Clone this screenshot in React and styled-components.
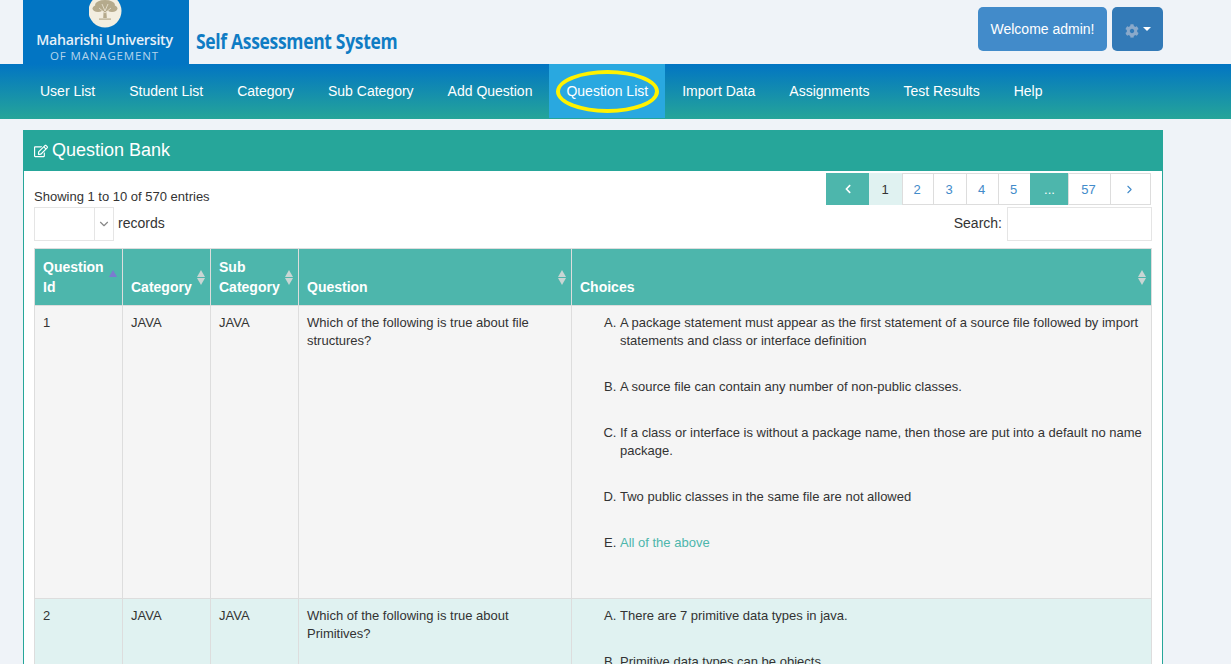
import React from "react";
import styled, { createGlobalStyle } from "styled-components";
import { FaCog, FaRegEdit, FaChevronLeft } from "react-icons/fa";
import { FiChevronDown, FiChevronRight } from "react-icons/fi";

const GlobalStyle = createGlobalStyle`
  html, body {
    margin: 0;
    height: 100%;
    overflow: hidden;
    background: #eff3f8;
    font-family: "Liberation Sans", Arial, sans-serif;
    color: #333;
  }
  * {
    box-sizing: border-box;
  }
`;

const Header = styled.header`
  display: flex;
  align-items: flex-start;
  height: 64px;
  padding: 0 68px 0 23px;
`;

const Logo = styled.div`
  display: flex;
  flex-direction: column;
  align-items: center;
  width: 166px;
  height: 64px;
  background: #0275c3;
  color: #fff;
  overflow: hidden;
`;

const LogoName = styled.div`
  margin: 4px 3px 0 0;
  font-family: "Open Sans", sans-serif;
  font-size: 14.2px;
  font-weight: 600;
  letter-spacing: -0.25px;
  line-height: 16px;
  white-space: nowrap;
  color: #e6f0f8;
`;

const LogoSub = styled.div`
  margin: 1px 3px 0 0;
  font-family: "Open Sans", sans-serif;
  font-size: 11.5px;
  line-height: 13px;
  letter-spacing: 0.85px;
  white-space: nowrap;
  color: #b4d4ec;
`;

const SiteTitle = styled.div`
  margin: 28px 0 0 7px;
  font-family: "Open Sans", sans-serif;
  font-size: 22px;
  line-height: 24px;
  font-weight: 700;
  letter-spacing: -0.4px;
  color: #0f7cc4;
  transform: scaleX(0.795);
  transform-origin: left center;
  white-space: nowrap;
`;

const UserArea = styled.div`
  display: flex;
  gap: 5px;
  margin: 7px 0 0 auto;
`;

const WelcomeButton = styled.div`
  display: flex;
  align-items: center;
  justify-content: center;
  width: 129px;
  height: 44px;
  border-radius: 5px;
  background: #428bca;
  color: #fff;
  font-size: 14px;
`;

const GearButton = styled.div`
  display: flex;
  align-items: center;
  justify-content: center;
  gap: 4px;
  width: 51px;
  height: 44px;
  padding-top: 3px;
  border-radius: 5px;
  background: #337ab7;
  color: #8aa9ca;
  font-size: 14px;
`;

const Caret = styled.span`
  width: 0;
  height: 0;
  margin: -4px 0 0 0;
  border-left: 4px solid transparent;
  border-right: 4px solid transparent;
  border-top: 4px solid #fff;
`;

const Nav = styled.nav`
  display: flex;
  height: 55px;
  padding-left: 23px;
  background: linear-gradient(to bottom, #0275c3, #25a599);
`;

const NavItem = styled.a`
  position: relative;
  display: flex;
  align-items: center;
  height: 54px;
  padding: 0 17px;
  font-size: 14px;
  color: #fff;
  background: ${(p) => (p.$active ? "#29a8e0" : "transparent")};
`;

const Highlight = styled.span`
  position: absolute;
  left: 7px;
  top: 6px;
  width: 103px;
  height: 43px;
  border: 4px solid #fff200;
  border-radius: 50%;
`;

const Panel = styled.section`
  margin: 11px 68px 0 23px;
  background: #fff;
  border: 1px solid #26a69a;
  border-width: 0 1px;
`;

const PanelHeading = styled.h2`
  display: flex;
  align-items: center;
  gap: 4px;
  height: 41px;
  margin: 0 -1px;
  padding: 0 0 0 11px;
  background: #26a69a;
  color: #fff;
  font-size: 18px;
  font-weight: 400;

  svg {
    font-size: 14px;
  }
`;

const PanelBody = styled.div`
  padding: 2px 10px 0;
`;

const TopRow = styled.div`
  display: flex;
  justify-content: space-between;
  align-items: flex-end;
  padding-right: 1px;
`;

const Info = styled.div`
  margin-bottom: -1px;
  font-size: 13px;
  line-height: 18px;
`;

const Pagination = styled.ul`
  display: flex;
  margin: 0;
  padding: 0;
  list-style: none;
  height: 32px;
`;

const PageItem = styled.li`
  display: flex;
  align-items: center;
  justify-content: center;
  width: ${(p) => p.$w}px;
  padding-right: ${(p) => (p.$fill ? 0 : 2)}px;
  font-size: 13px;
  border: 1px solid #ddd;
  margin-left: -1px;
  color: ${(p) => (p.$current ? "#333" : p.$fill ? "#fff" : "#428bca")};
  background: ${(p) => (p.$current ? "#e0f2f1" : p.$fill ? "#4db6ac" : "#fff")};
  border-color: ${(p) => (p.$current ? "#e0f2f1" : p.$fill ? "#4db6ac" : "#ddd")};

  svg {
    font-size: ${(p) => (p.$fill ? 10 : 13)}px;
  }
`;

const ControlRow = styled.div`
  display: flex;
  align-items: center;
  justify-content: space-between;
  margin-top: 2px;
`;

const Length = styled.div`
  display: flex;
  align-items: center;
  gap: 4px;
`;

const ControlLabel = styled.span`
  margin-bottom: 2px;
  font-size: 14px;
`;

const FakeSelect = styled.div`
  display: flex;
  justify-content: flex-end;
  width: 80px;
  height: 34px;
  background: #fff;
  border: 1px solid #e5e5e5;
`;

const SelectArrow = styled.span`
  display: flex;
  align-items: center;
  justify-content: center;
  width: 19px;
  border-left: 1px solid #e5e5e5;
  color: #888;
  font-size: 14px;
`;

const Search = styled.label`
  display: flex;
  align-items: center;
  gap: 5px;
`;

const SearchInput = styled.input`
  width: 145px;
  height: 34px;
  padding: 0 6px;
  border: 1px solid #e5e5e5;
  background: #fff;
  outline: none;
`;

const Table = styled.table`
  width: 1118px;
  margin-top: 7px;
  border-collapse: collapse;
  table-layout: fixed;
  font-size: 13px;
  line-height: 18px;
`;

const Th = styled.th`
  position: relative;
  width: ${(p) => p.$w}px;
  padding: 8px;
  border: 1px solid #ddd;
  background: #4db6ac;
  color: #fff;
  font-size: 14px;
  line-height: 20px;
  text-align: left;
  vertical-align: bottom;
`;

const Td = styled.td`
  padding: 8px;
  border: 1px solid #ddd;
  vertical-align: top;
`;

const Row = styled.tr`
  background: ${(p) => (p.$alt ? "#e0f2f1" : "#f5f5f5")};
`;

const SortIcon = styled.span`
  position: absolute;
  right: 5px;
  top: 21px;
  display: flex;
  flex-direction: column;
  gap: 1px;
`;

const Tri = styled.span`
  width: 0;
  height: 0;
  border-left: 4px solid transparent;
  border-right: 4px solid transparent;
  ${(p) =>
    p.$down
      ? "border-top: 7px solid #c9d6d4;"
      : `border-bottom: 7px solid ${p.$on ? "#7b7bd0" : "#c9d6d4"};`}
`;

const Choices = styled.ol`
  margin: 0 0 38px;
  padding-left: 40px;
  list-style: upper-alpha;
`;

const Choice = styled.li`
  margin-bottom: 28px;
  color: ${(p) => (p.$correct ? "#4db6ac" : "#333")};

  &::marker {
    color: #333;
  }
`;

const Sort = ({ on }) => (
  <SortIcon>
    <Tri $on={on} />
    {!on && <Tri $down />}
  </SortIcon>
);

const navItems = [
  "User List",
  "Student List",
  "Category",
  "Sub Category",
  "Add Question",
  "Question List",
  "Import Data",
  "Assignments",
  "Test Results",
  "Help",
];

const pages = [
  { label: <FaChevronLeft />, w: 44, fill: true },
  { label: "1", w: 34, current: true },
  { label: "2", w: 32 },
  { label: "3", w: 34 },
  { label: "4", w: 33 },
  { label: "5", w: 33 },
  { label: "...", w: 39, fill: true },
  { label: "57", w: 43 },
  { label: <FiChevronRight />, w: 41 },
];

const rows = [
  {
    id: 1,
    question: "Which of the following is true about file structures?",
    choices: [
      "A package statement must appear as the first statement of a source file followed by import statements and class or interface definition",
      "A source file can contain any number of non-public classes.",
      "If a class or interface is without a package name, then those are put into a default no name package.",
      "Two public classes in the same file are not allowed",
      "All of the above",
    ],
    correct: 4,
  },
  {
    id: 2,
    question: "Which of the following is true about Primitives?",
    choices: [
      "There are 7 primitive data types in java.",
      "Primitive data types can be objects.",
    ],
    correct: -1,
  },
];

const TreeEmblem = () => (
  <svg width="34" height="28" viewBox="1 6 34 28">
    <circle cx="17" cy="17" r="16.5" fill="#f3eee0" />
    <g fill="#b5aa8c">
      <ellipse cx="17" cy="11" rx="10" ry="5" />
      <ellipse cx="10" cy="14.5" rx="5.5" ry="3.5" />
      <ellipse cx="24" cy="14.5" rx="5.5" ry="3.5" />
      <ellipse cx="17" cy="15" rx="4" ry="2.5" />
      <path d="M15.8 15h2.4l.6 9h-3.6z" />
      <rect x="11" y="24.5" width="12" height="1.2" />
    </g>
    <g stroke="#f3eee0" strokeWidth=".7" fill="none">
      <path d="M17 19l-6-5M17 19l6-5M17 17l-3-7M17 17l3-7" />
    </g>
  </svg>
);

export default function App() {
  return (
    <>
      <GlobalStyle />
      <Header>
        <Logo>
          <TreeEmblem />
          <LogoName>Maharishi University</LogoName>
          <LogoSub>OF MANAGEMENT</LogoSub>
        </Logo>
        <SiteTitle>Self Assessment System</SiteTitle>
        <UserArea>
          <WelcomeButton>Welcome admin!</WelcomeButton>
          <GearButton>
            <FaCog />
            <Caret />
          </GearButton>
        </UserArea>
      </Header>
      <Nav>
        {navItems.map((item) => (
          <NavItem key={item} $active={item === "Question List"}>
            {item}
            {item === "Question List" && <Highlight />}
          </NavItem>
        ))}
      </Nav>
      <Panel>
        <PanelHeading>
          <FaRegEdit />
          Question Bank
        </PanelHeading>
        <PanelBody>
          <TopRow>
            <Info>Showing 1 to 10 of 570 entries</Info>
            <Pagination>
              {pages.map((page, i) => (
                <PageItem key={i} $w={page.w} $fill={page.fill} $current={page.current}>
                  {page.label}
                </PageItem>
              ))}
            </Pagination>
          </TopRow>
          <ControlRow>
            <Length>
              <FakeSelect>
                <SelectArrow>
                  <FiChevronDown />
                </SelectArrow>
              </FakeSelect>
              <ControlLabel>records</ControlLabel>
            </Length>
            <Search>
              <ControlLabel>Search:</ControlLabel>
              <SearchInput />
            </Search>
          </ControlRow>
          <Table>
            <thead>
              <tr>
                <Th $w={88}>
                  Question Id
                  <Sort on />
                </Th>
                <Th $w={88}>
                  Category
                  <Sort />
                </Th>
                <Th $w={88}>
                  Sub Category
                  <Sort />
                </Th>
                <Th $w={273}>
                  Question
                  <Sort />
                </Th>
                <Th>
                  Choices
                  <Sort />
                </Th>
              </tr>
            </thead>
            <tbody>
              {rows.map((row, i) => (
                <Row key={row.id} $alt={i % 2 === 1}>
                  <Td>{row.id}</Td>
                  <Td>JAVA</Td>
                  <Td>JAVA</Td>
                  <Td>{row.question}</Td>
                  <Td>
                    <Choices>
                      {row.choices.map((choice, c) => (
                        <Choice key={c} $correct={c === row.correct}>
                          {choice}
                        </Choice>
                      ))}
                    </Choices>
                  </Td>
                </Row>
              ))}
            </tbody>
          </Table>
        </PanelBody>
      </Panel>
    </>
  );
}
